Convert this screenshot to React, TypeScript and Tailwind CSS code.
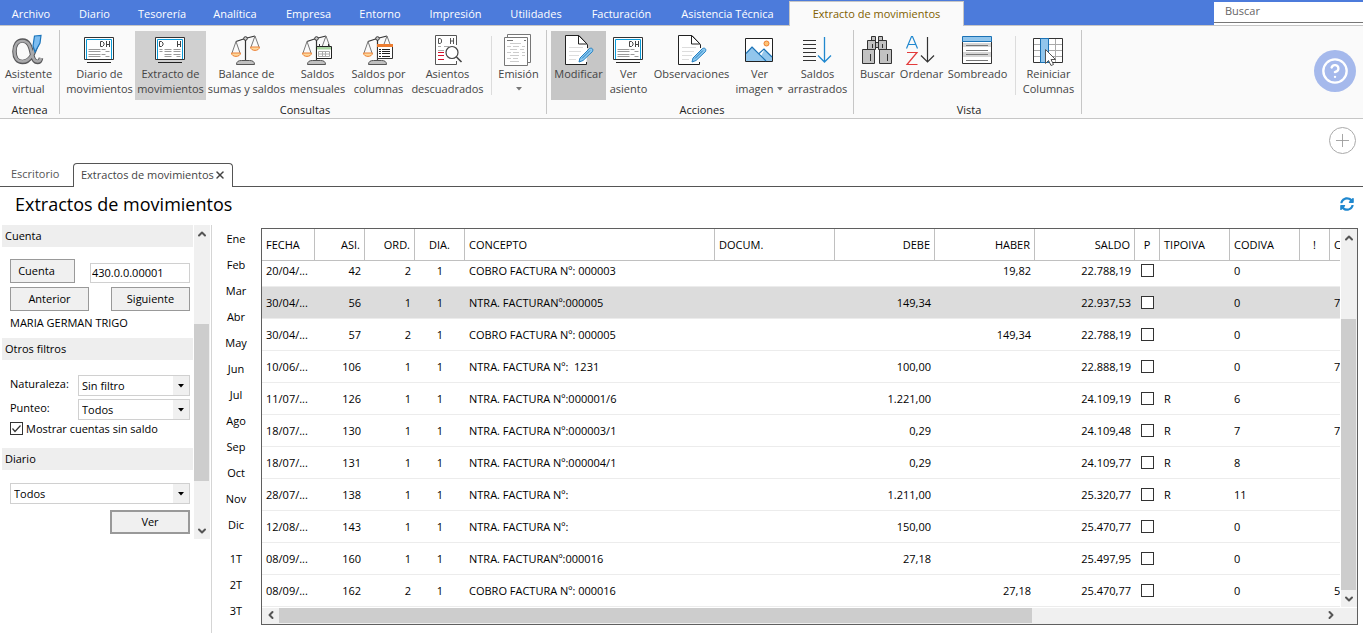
import React, { useState } from "react";
import { ChevronDown, ChevronLeft, ChevronRight, ChevronUp, CircleHelp, Plus, X } from "lucide-react";
import { FaSyncAlt } from "react-icons/fa";

const menuItems = [
  "Archivo",
  "Diario",
  "Tesorería",
  "Analítica",
  "Empresa",
  "Entorno",
  "Impresión",
  "Utilidades",
  "Facturación",
  "Asistencia Técnica",
];

const months = ["Ene", "Feb", "Mar", "Abr", "May", "Jun", "Jul", "Ago", "Sep", "Oct", "Nov", "Dic"];
const quarters = ["1T", "2T", "3T"];

const movements = [
  { fecha: "20/04/...", asi: 42, ord: 2, dia: 1, concepto: "COBRO FACTURA Nº: 000003", debe: "", haber: "19,82", saldo: "22.788,19", tipo: "", cod: "0", c: "" },
  { fecha: "30/04/...", asi: 56, ord: 1, dia: 1, concepto: "NTRA. FACTURANº:000005", debe: "149,34", haber: "", saldo: "22.937,53", tipo: "", cod: "0", c: "7" },
  { fecha: "30/04/...", asi: 57, ord: 2, dia: 1, concepto: "COBRO FACTURA Nº: 000005", debe: "", haber: "149,34", saldo: "22.788,19", tipo: "", cod: "0", c: "" },
  { fecha: "10/06/...", asi: 106, ord: 1, dia: 1, concepto: "NTRA. FACTURA Nº:  1231", debe: "100,00", haber: "", saldo: "22.888,19", tipo: "", cod: "0", c: "7" },
  { fecha: "11/07/...", asi: 126, ord: 1, dia: 1, concepto: "NTRA. FACTURA Nº:000001/6", debe: "1.221,00", haber: "", saldo: "24.109,19", tipo: "R", cod: "6", c: "" },
  { fecha: "18/07/...", asi: 130, ord: 1, dia: 1, concepto: "NTRA. FACTURA Nº:000003/1", debe: "0,29", haber: "", saldo: "24.109,48", tipo: "R", cod: "7", c: "7" },
  { fecha: "18/07/...", asi: 131, ord: 1, dia: 1, concepto: "NTRA. FACTURA Nº:000004/1", debe: "0,29", haber: "", saldo: "24.109,77", tipo: "R", cod: "8", c: "" },
  { fecha: "28/07/...", asi: 138, ord: 1, dia: 1, concepto: "NTRA. FACTURA Nº:", debe: "1.211,00", haber: "", saldo: "25.320,77", tipo: "R", cod: "11", c: "" },
  { fecha: "12/08/...", asi: 143, ord: 1, dia: 1, concepto: "NTRA. FACTURA Nº:", debe: "150,00", haber: "", saldo: "25.470,77", tipo: "", cod: "0", c: "" },
  { fecha: "08/09/...", asi: 160, ord: 1, dia: 1, concepto: "NTRA. FACTURANº:000016", debe: "27,18", haber: "", saldo: "25.497,95", tipo: "", cod: "0", c: "" },
  { fecha: "08/09/...", asi: 162, ord: 2, dia: 1, concepto: "COBRO FACTURA Nº: 000016", debe: "", haber: "27,18", saldo: "25.470,77", tipo: "", cod: "0", c: "5" },
];

const columns = [
  { label: "FECHA", className: "w-[53px] text-left" },
  { label: "ASI.", className: "w-[50px] text-right" },
  { label: "ORD.", className: "w-[50px] text-right" },
  { label: "DIA.", className: "w-[50px] text-center" },
  { label: "CONCEPTO", className: "w-[250px] text-left" },
  { label: "DOCUM.", className: "w-[120px] text-left" },
  { label: "DEBE", className: "w-[100px] text-right" },
  { label: "HABER", className: "w-[100px] text-right" },
  { label: "SALDO", className: "w-[100px] text-right" },
  { label: "P", className: "w-[25px] text-center" },
  { label: "TIPOIVA", className: "w-[70px] text-left" },
  { label: "CODIVA", className: "w-[70px] text-left" },
  { label: "!", className: "w-[30px] text-center" },
  { label: "C", className: "text-left" },
];

/* ---------- ribbon icons ---------- */

const Icon = ({ children }: { children: React.ReactNode }) => (
  <svg width="32" height="32" viewBox="0 0 32 32" fill="none" aria-hidden="true" className="mr-px shrink-0">
    {children}
  </svg>
);

const AlphaIcon = () => (
  <Icon>
    <path d="M25 9C22 18 19 28 10.500 28C5.500 28 2.500 24 2.500 17.500C2.500 11 5.500 6.500 10.500 6.500C17 6.500 18.500 13 20 20C21 25 22.500 28 25.500 28C27.500 28 28.500 26.500 29 24" stroke="#58585a" strokeWidth="4.600" />
    <path d="M25 9C22 18 19 27.500 10.500 27.500C5.500 27.500 2.500 24 2.500 17.500C2.500 11 5.500 7 10.500 7C17 7 18.500 13 20 20C21 25 22.500 27.500 25.500 27.500C27.500 27.500 28.500 26.500 29 24" stroke="#a9a9ab" strokeWidth="2.600" />
    <path d="M22.500 2L29 1.500L28 9L23 18L21 12Z" fill="#7dbdf0" stroke="#1b75bb" strokeWidth="1.200" />
  </Icon>
);

const ScreenIcon = ({ split = false }: { split?: boolean }) => (
  <Icon>
    <path d="M1.500 3.500h29v22h-29z" fill="#fff" stroke="#333" />
    <path d="M3.500 25V5.500h25V25" stroke="#0a9bd8" />
    {split ? (
      <>
        <path d="M5.500 7.500v5h2l1.500-1.500v-2l-1.500-1.500z" stroke="#444" />
        <path d="M23.500 7v6M26.500 7v6M23.500 10.500h3" stroke="#444" />
        <path d="M5.500 15.500h3m2 0h7m2 0h7M5.500 17.500h3m2 0h7m2 0h7M10.500 20.500h7m2 0h7M10.500 22.500h7m5 0h4" stroke="#9a9a9a" />
      </>
    ) : (
      <>
        <path d="M17.500 7.500v5h2l1.500-1.500v-2l-1.500-1.500z" stroke="#444" />
        <path d="M23.500 7v6M26.500 7v6M23.500 10.500h3" stroke="#444" />
        <path d="M5.500 15.500h12m1 0h4M5.500 17.500h12m5 0h4M5.500 20.500h12m1 0h4M5.500 22.500h12m5 0h4" stroke="#9a9a9a" />
      </>
    )}
    <path d="M4 28.500h24" stroke="#222" />
  </Icon>
);

const Scales = () => (
  <>
    <path d="M6 7.500L15 4.500L25 2M15.500 6v20" stroke="#333" strokeWidth="1.200" />
    <circle cx="15.500" cy="4.500" r="1.800" fill="#ccc" stroke="#333" />
    <path d="M6 7.500L2 19M6 7.500L10 19M25 2L21 13M25 2L29 13" stroke="#777" />
    <path d="M1.500 19h9c0 4.500-9 4.500-9 0zM20.500 13h9c0 4.500-9 4.500-9 0z" fill="#fdd79b" stroke="#ed8136" />
    <path d="M6.500 30.500c0-3 2-4 5-4h8c3 0 5 1 5 4z" fill="#c0c0c0" stroke="#555" />
  </>
);

const BalanceIcon = () => <Icon><Scales /></Icon>;

const MonthlyIcon = () => (
  <Icon>
    <Scales />
    <path d="M15.500 12.500h15v12h-15z" fill="#fff" stroke="#222" />
    <path d="M16 13h14v2.500H16z" fill="#a8d4a0" />
    <path d="M18.500 10v3M27.500 10v3" stroke="#333" />
    <path d="M17.500 17.500h11v5h-11zM21.500 17.500v5M24.500 17.500v5M17.500 20h11" stroke="#aaa" />
  </Icon>
);

const ColumnsIcon = () => (
  <Icon>
    <Scales />
    <path d="M15.500 10.500h15v14h-15z" fill="#fff" stroke="#333" />
    <path d="M15 10h16v3H15z" fill="#ed7d31" />
    <path d="M17 15.500h2m1 0h8M17 17.500h2m1 0h8M17 19.500h2m1 0h8M17 22.500h2m1 0h8" stroke="#222" />
  </Icon>
);

const UnbalancedIcon = () => (
  <Icon>
    <path d="M25.500 11V1.500h-21v29h21V27" fill="#fff" stroke="#555" />
    <path d="M7.500 4.500v5h1.500l1.500-1v-3l-1.500-1zM19.500 4v6M22.500 4v6M19.500 7h3" stroke="#555" />
    <path d="M7 12.500h3m3 0h5M7 16.500h6" stroke="#aaa" />
    <path d="M7 18.500h6M7 21.500h6M7 25.500h6" stroke="#d5102a" />
    <circle cx="21" cy="18.500" r="6" fill="#fff" stroke="#444" strokeWidth="1.200" />
    <path d="M25.500 23l5 5" stroke="#444" strokeWidth="1.600" />
  </Icon>
);

const PagesIcon = () => (
  <Icon>
    <path d="M5.500 .5h23v28h-23z" fill="#fff" stroke="#777" />
    <path d="M2.500 3.500h23v28h-23z" fill="#fff" stroke="#777" />
    <path d="M5 6.500h6M22 6.500h2" stroke="#777" />
    <path d="M8 9.500h11M5 12.500h4m2 0h6m3 0h3M8 15.500h7m3 0h4M5 18.500h4m2 0h6m3 0h3M8 21.500h9m3 0h3M5 24.500h4m2 0h5M8 27.500h9" stroke="#ccc" />
  </Icon>
);

const EditPageIcon = () => (
  <Icon>
    <path d="M25.500 14V10.500L17 1.500H3.500v29h21V28" fill="#fff" stroke="#222" />
    <path d="M16.500 1.500v8.500h8.500z" fill="#fff" stroke="#222" />
    <path d="M7 13.500h14M7 17.500h12M7 21.500h10M7 25.500h7" stroke="#ddd" />
    <path d="M18 24L27.500 14.500c2.500-1 4 .5 3 3L21 26.500l-4 1.500z" fill="#8cc8f0" stroke="#237fc0" />
    <path d="M20 24.500l8-8" stroke="#237fc0" />
  </Icon>
);

const PictureIcon = () => (
  <Icon>
    <path d="M2.500 4.500h27v23h-27z" fill="#fff" stroke="#222" />
    <path d="M3 20l6.500-7.500L18 22l3.500-6.500L29 22.500V27H3z" fill="#92c6ec" />
    <path d="M3 19.500l6-6.500L23 27M15.500 20l5.500-5L29 23" stroke="#1b72b5" strokeWidth="1.200" />
    <circle cx="23.500" cy="9.500" r="2.500" fill="#fdc374" stroke="#ed7d31" />
  </Icon>
);

const CarryIcon = () => (
  <Icon>
    <path d="M2 6.500h13M2 10.500h13M2 14.500h13M2 18.500h13M2 22.500h13M2 26.500h13" stroke="#333" />
    <path d="M23.500 3v24.500M17 21.500l6.500 6.500L30 21.500" stroke="#2088cf" strokeWidth="1.300" />
  </Icon>
);

const BinocularsIcon = () => (
  <Icon>
    <path d="M10.500 2.500h4v4h-4zM17.500 2.500h4v4h-4zM6.500 6.500h8v9h-8zM17.500 6.500h8v9h-8zM14.500 8.500h3v5h-3z" fill="#c2c2c2" stroke="#333" />
    <path d="M1.500 15.500h12v14h-12zM18.500 15.500h12v14h-12z" fill="#c2c2c2" stroke="#333" />
    <path d="M9.500 20v7M26.500 20v7M11.500 10v4M21.500 10v4" stroke="#333" />
  </Icon>
);

const SortIcon = () => (
  <Icon>
    <path d="M1.500 14.500L6.500 2.500h1l5 12M3.500 10.500h7" stroke="#2088cf" strokeWidth="1.200" />
    <path d="M2 18.500h10L2 30.500h10.500" stroke="#e33b3b" strokeWidth="1.200" />
    <path d="M22.500 3v25M16 21.500l6.500 6.500L29 21.500" stroke="#333" strokeWidth="1.200" />
  </Icon>
);

const ShadeIcon = () => (
  <Icon>
    <path d="M1.500 7.500h29v22h-29z" fill="#fff" stroke="#333" />
    <path d="M2 9h28v4H2zM2 18h28v5H2z" fill="#d6d6d6" />
    <path d="M5 11.500h22M5 16.500h22M5 20.500h22M5 26.500h22" stroke="#777" />
    <path d="M1.500 2.500h29v5h-29z" fill="#92c6ec" stroke="#1b72b5" />
  </Icon>
);

const ResetColumnsIcon = () => (
  <Icon>
    <path d="M1.500 4.500h29v24h-29z" fill="#fff" stroke="#333" />
    <path d="M16.500 5v23M23.500 5v23M2 10.500h28M2 16.500h28M2 22.500h28" stroke="#aaa" />
    <path d="M8.500 4.500h8v24h-8z" fill="#92c6ec" stroke="#1b72b5" />
    <path d="M13.500 15.500v14l3-3 2.500 5 2.500-1-2.500-5h4.500z" fill="#fff" stroke="#555" />
  </Icon>
);

/* ---------- ribbon pieces ---------- */

interface RibbonButtonProps {
  lines: string[];
  className: string;
  icon: React.ReactNode;
  caret?: boolean;
}

const Caret = () => (
  <svg width="6" height="4" viewBox="0 0 6 4" aria-hidden="true" className="inline-block">
    <path d="M0 0h6L3 3.500z" fill="#777" />
  </svg>
);

const RibbonButton: React.FC<RibbonButtonProps> = ({ lines, className, icon, caret }) => (
  <button type="button" className={`flex h-[69px] shrink-0 flex-col items-center whitespace-nowrap pt-[3px] text-[#444] ${className}`}>
    {icon}
    <span className="flex h-[15px] items-center">{lines[0]}</span>
    <span className="flex h-[15px] items-center gap-1">
      {lines[1]}
      {caret && <Caret />}
    </span>
  </button>
);

const RibbonGroup = ({ title, className, children }: { title: string; className: string; children: React.ReactNode }) => (
  <section aria-label={title} className={`flex shrink-0 flex-col border-r border-[#c6c6c6] pt-px ${className}`}>
    <div className="flex">{children}</div>
    <div className="pt-0.5 text-center text-[#222]">{title}</div>
  </section>
);

const Divider = () => <div className="mx-[5px] mt-[5px] h-[59px] w-px shrink-0 bg-[#dcdcdc]" />;

/* ---------- filters ---------- */

const FilterHeading = ({ children }: { children: React.ReactNode }) => (
  <h2 className="flex h-[22px] items-center bg-[#eee] px-[3px] pb-0.5">{children}</h2>
);

const DropDown = ({ id, options, className, label }: { id: string; options: string[]; className: string; label?: string }) => (
  <div className={`relative h-[21px] ${className}`}>
    <select id={id} aria-label={label} className="h-full w-full appearance-none border border-[#d0d0d0] bg-white pl-[3px]">
      {options.map((option) => (
        <option key={option}>{option}</option>
      ))}
    </select>
    <span className="pointer-events-none absolute inset-y-px right-px flex w-4 items-center justify-center bg-[#f0f0f0]">
      <svg width="6" height="4" viewBox="0 0 6 4" aria-hidden="true">
        <path d="M0 0h6L3 3.500z" fill="#000" />
      </svg>
    </span>
  </div>
);

const formButton = "border border-[#999] bg-[#f0f0f0] pb-0.5 text-center";

const App: React.FC = () => {
  const [showEmpty, setShowEmpty] = useState(true);
  const [checked, setChecked] = useState<number[]>([]);
  const [selected, setSelected] = useState(1);

  const toggle = (index: number) => {
    setChecked((prev) => (prev.includes(index) ? prev.filter((i) => i !== index) : [...prev, index]));
  };

  return (
    <div className="flex min-h-screen flex-col overflow-hidden bg-white font-['Open_Sans','Noto_Sans',sans-serif] text-[11px] leading-[15px] text-black">
      <header>
        <div className="flex h-[26px] border-b border-[#c6c6c6] bg-[#4c7bdb]">
          <nav className="grid shrink-0 grid-cols-[62px_65px_70px_76px_71px_72px_79px_82px_89px_123px_175px]">
            {menuItems.map((item) => (
              <a key={item} href="#" className="flex items-center justify-center pt-0.5 text-white">
                {item}
              </a>
            ))}
            <a href="#" className="-mb-px mt-px flex items-center justify-center border-x border-t border-[#c6c6c6] bg-[#fafafa] pb-px text-[#806000]">
              Extracto de movimientos
            </a>
          </nav>
          <div className="ml-auto mt-0.5 w-[149px] bg-white">
            <input
              type="text"
              placeholder="Buscar"
              aria-label="Buscar"
              className="block h-[21px] w-full border-b border-[#777] px-[11px] pb-1 placeholder:text-[#666] focus:outline-none"
            />
          </div>
        </div>

        <div className="flex border-b border-[#c6c6c6] bg-[#fafafa] pr-[7px]">
          <div className="flex h-[92px] py-1">
            <RibbonGroup title="Atenea" className="w-[60px]">
              <RibbonButton className="w-[57px]" lines={["Asistente", "virtual"]} icon={<AlphaIcon />} />
            </RibbonGroup>
            <RibbonGroup title="Consultas" className="w-[487px] pl-1">
              <RibbonButton className="w-[71px]" lines={["Diario de", "movimientos"]} icon={<ScreenIcon />} />
              <RibbonButton className="w-[71px] bg-[#d0d0d0]" lines={["Extracto de", "movimientos"]} icon={<ScreenIcon split />} />
              <RibbonButton className="w-[81px]" lines={["Balance de", "sumas y saldos"]} icon={<BalanceIcon />} />
              <RibbonButton className="w-[61px]" lines={["Saldos", "mensuales"]} icon={<MonthlyIcon />} />
              <RibbonButton className="w-[61px]" lines={["Saldos por", "columnas"]} icon={<ColumnsIcon />} />
              <RibbonButton className="w-[77px]" lines={["Asientos", "descuadrados"]} icon={<UnbalancedIcon />} />
              <Divider />
              <RibbonButton className="w-[43px]" lines={["Emisión", ""]} icon={<PagesIcon />} caret />
            </RibbonGroup>
            <RibbonGroup title="Acciones" className="w-[307px] pl-1">
              <RibbonButton className="w-[55px] bg-[#c6c6c6]" lines={["Modificar", ""]} icon={<EditPageIcon />} />
              <RibbonButton className="w-[45px]" lines={["Ver", "asiento"]} icon={<ScreenIcon />} />
              <RibbonButton className="w-[81px]" lines={["Observaciones", ""]} icon={<EditPageIcon />} />
              <RibbonButton className="w-[55px]" lines={["Ver", "imagen"]} icon={<PictureIcon />} caret />
              <RibbonButton className="w-[61px]" lines={["Saldos", "arrastrados"]} icon={<CarryIcon />} />
            </RibbonGroup>
            <RibbonGroup title="Vista" className="w-[228px] pl-[3px]">
              <RibbonButton className="w-[41px]" lines={["Buscar", ""]} icon={<BinocularsIcon />} />
              <RibbonButton className="w-[47px]" lines={["Ordenar", ""]} icon={<SortIcon />} />
              <RibbonButton className="w-[65px]" lines={["Sombreado", ""]} icon={<ShadeIcon />} />
              <Divider />
              <RibbonButton className="w-[55px]" lines={["Reiniciar", "Columnas"]} icon={<ResetColumnsIcon />} />
            </RibbonGroup>
          </div>
          <button type="button" aria-label="Ayuda" className="ml-auto mt-6 flex size-[42px] items-center justify-center rounded-full bg-[#a5b9ec] text-white">
            <CircleHelp size={28} strokeWidth={2} />
          </button>
        </div>
      </header>

      <div className="flex justify-end px-[7px] pt-2">
        <button type="button" aria-label="Añadir" className="flex size-[27px] items-center justify-center rounded-full border border-[#aaa] text-[#999]">
          <Plus size={21} strokeWidth={1} />
        </button>
      </div>

      <div className="mt-[9px] flex h-6">
        <a href="#" className="flex w-[73px] items-center border-b border-[#555] pb-0.5 pl-[11px] text-[#555]">
          Escritorio
        </a>
        <div className="flex w-40 items-center justify-between whitespace-nowrap rounded-t border-x border-t border-[#555] pb-0.5 pl-[7px] pr-2 text-[#444]">
          Extractos de movimientos
          <button type="button" aria-label="Cerrar pestaña" className="-mr-px">
            <X size={12} strokeWidth={3} />
          </button>
        </div>
        <div className="flex-1 border-b border-[#555]" />
      </div>

      <div className="flex h-[38px] items-center justify-between pb-1 pl-[15px] pr-[9px]">
        <h1 className="text-[18px] leading-6">Extractos de movimientos</h1>
        <button type="button" aria-label="Actualizar" className="text-[#2088cf]">
          <FaSyncAlt size={14} />
        </button>
      </div>

      <main className="flex flex-1">
        <aside className="flex w-[212px] shrink-0 border-r border-[#d5d5d5] pl-0.5">
          <form className="w-[191px]" onSubmit={(e) => e.preventDefault()}>
            <FilterHeading>Cuenta</FilterHeading>
            <div className="ml-2 mr-[3px] mt-3 grid gap-1">
              <div className="flex items-end justify-between">
                <button type="button" className={`h-6 w-[65px] pr-3 ${formButton}`}>
                  Cuenta
                </button>
                <input type="text" aria-label="Cuenta" defaultValue="430.0.0.00001" className="h-5 w-[100px] border border-[#d0d0d0] px-px pb-px" />
              </div>
              <div className="flex justify-between">
                <button type="button" className={`h-6 w-[79px] ${formButton}`}>
                  Anterior
                </button>
                <button type="button" className={`h-6 w-[79px] ${formButton}`}>
                  Siguiente
                </button>
              </div>
              <p>MARIA GERMAN TRIGO</p>
            </div>

            <div className="mt-2">
              <FilterHeading>Otros filtros</FilterHeading>
            </div>
            <div className="ml-2 mr-[3px] mt-[15px]">
              <div className="flex justify-between">
                <label htmlFor="naturaleza" className="pt-px">Naturaleza:</label>
                <DropDown id="naturaleza" className="w-28" options={["Sin filtro", "Deudora", "Acreedora"]} />
              </div>
              <div className="mt-[3px] flex justify-between">
                <label htmlFor="punteo" className="pt-px">Punteo:</label>
                <DropDown id="punteo" className="w-28" options={["Todos", "Punteados", "No punteados"]} />
              </div>
              <label className="mt-px flex h-[15px] items-center gap-[3px]">
                <span className="relative size-[13px]">
                  <input
                    type="checkbox"
                    checked={showEmpty}
                    onChange={() => setShowEmpty(!showEmpty)}
                    className="block size-[13px] appearance-none border border-[#333] bg-white"
                  />
                  {showEmpty && (
                    <svg width="13" height="13" viewBox="0 0 13 13" fill="none" aria-hidden="true" className="pointer-events-none absolute inset-0">
                      <path d="M2.500 6.500L5 9.500L10.500 3.500" stroke="#333" strokeWidth="1.200" />
                    </svg>
                  )}
                </span>
                Mostrar cuentas sin saldo
              </label>
            </div>

            <div className="mt-3">
              <FilterHeading>Diario</FilterHeading>
            </div>
            <div className="ml-2 mr-[3px] mt-[13px] flex flex-col items-end gap-1.5">
              <DropDown id="diario" label="Diario" className="w-full" options={["Todos"]} />
              <button type="submit" className="h-6 w-20 border-2 border-[#999] bg-[#f0f0f0] pb-0.5 text-center">
                Ver
              </button>
            </div>
          </form>
          <div className="ml-px flex h-[314px] w-4 flex-col items-center bg-[#f0f0f0] text-[#555]">
            <div className="flex h-[99px] w-full items-start justify-center pt-[3px]">
              <ChevronUp size={12} strokeWidth={4} />
            </div>
            <div className="h-[157px] w-[15px] self-start bg-[#cdcdcd]" />
            <div className="flex flex-1 items-end pb-0.5">
              <ChevronDown size={12} strokeWidth={4} />
            </div>
          </div>
        </aside>

        <nav aria-label="Periodos" className="flex w-[49px] shrink-0 flex-col pr-px">
          {months.map((month) => (
            <button key={month} type="button" className="h-[26px] text-center">
              {month}
            </button>
          ))}
          <div className="mt-2 flex flex-col">
            {quarters.map((quarter) => (
              <button key={quarter} type="button" className="h-[26px] text-center">
                {quarter}
              </button>
            ))}
          </div>
        </nav>

        <div className="mb-2 mr-[5px] mt-[3px] min-w-0 flex-1 border border-[#5f5f5f]">
          <div className="flex">
            <div className="min-w-0 flex-1 overflow-hidden">
              <table className="w-full table-fixed border-separate border-spacing-0">
                <thead>
                  <tr>
                    {columns.map((column) => (
                      <th key={column.label} scope="col" className={`h-8 overflow-hidden border-b border-r border-[#c0c0c0] px-1 font-normal last:border-r-0 ${column.className}`}>
                        {column.label}
                      </th>
                    ))}
                  </tr>
                </thead>
                <tbody>
                  {movements.map((row, index) => (
                    <tr
                      key={row.asi}
                      onClick={() => setSelected(index)}
                      className={`h-8 whitespace-pre first:h-[26px] [&>td]:border-b [&>td]:border-[#ececec] [&>td]:px-1 first:[&>td]:pb-[7px] ${selected === index ? "bg-[#dcdcdc]" : ""}`}
                    >
                      <td>{row.fecha}</td>
                      <td className="text-right">{row.asi}</td>
                      <td className="text-right">{row.ord}</td>
                      <td className="text-center">{row.dia}</td>
                      <td>{row.concepto}</td>
                      <td></td>
                      <td className="text-right">{row.debe}</td>
                      <td className="text-right">{row.haber}</td>
                      <td className="text-right">{row.saldo}</td>
                      <td>
                        <input
                          type="checkbox"
                          aria-label={`Punteo del asiento ${row.asi}`}
                          checked={checked.includes(index)}
                          onChange={() => toggle(index)}
                          className="mx-auto block size-[13px] appearance-none border border-[#333] bg-white checked:bg-[#333]"
                        />
                      </td>
                      <td>{row.tipo}</td>
                      <td>{row.cod}</td>
                      <td></td>
                      <td className="overflow-hidden">{row.c}</td>
                    </tr>
                  ))}
                </tbody>
              </table>
            </div>
            <div className="ml-px flex w-4 shrink-0 flex-col items-center bg-[#f0f0f0] text-[#555]">
              <div className="flex h-[90px] items-start pt-[3px]">
                <ChevronUp size={12} strokeWidth={4} />
              </div>
              <div className="w-[15px] flex-1 self-start bg-[#cdcdcd]" />
              <div className="flex h-[17px] items-center">
                <ChevronDown size={12} strokeWidth={4} />
              </div>
            </div>
          </div>
          <div className="mt-px flex h-4 bg-[#f0f0f0] pr-5 text-[#555]">
            <div className="flex w-[17px] justify-center pt-px">
              <ChevronLeft size={12} strokeWidth={4} />
            </div>
            <div className="h-[15px] w-[70%] bg-[#cdcdcd]" />
            <ChevronRight size={12} strokeWidth={4} className="ml-auto mt-px" />
          </div>
        </div>
      </main>
    </div>
  );
};

export default App;
